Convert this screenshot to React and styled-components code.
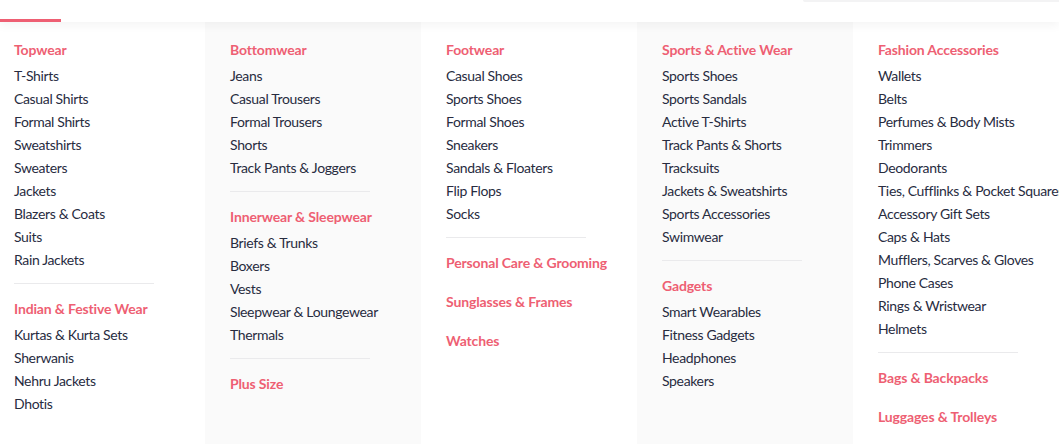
import React from "react";
import styled, { createGlobalStyle } from "styled-components";

const Global = createGlobalStyle`
  html, body { margin: 0; padding: 0; background: #fff; overflow: hidden; }
  body { font-family: Lato, "Noto Sans", sans-serif; -webkit-font-smoothing: antialiased; }
`;

const Page = styled.div`
  width: 1059px;
  height: 444px;
  overflow: hidden;
  display: flex;
  flex-direction: column;
`;

const Header = styled.div`
  position: relative;
  z-index: 2;
  height: 22px;
  flex: none;
  display: flex;
  align-items: flex-start;
  background: #fff;
  box-shadow: 0 4px 10px rgba(0, 0, 0, 0.045);
`;

const ActiveTab = styled.div`
  align-self: flex-end;
  width: 61px;
  height: 3px;
  background: #ee5f73;
`;

const SearchEdge = styled.div`
  margin-left: auto;
  width: 256px;
  height: 2px;
  background: #f3f3f4;
  border-bottom-left-radius: 4px;
`;

const Panel = styled.div`
  flex: 1;
  display: flex;
  align-items: stretch;
`;

const Column = styled.div`
  flex: none;
  box-sizing: border-box;
  width: ${(p) => (p.$first ? "205px" : "216px")};
  padding: 15.5px 0 0 ${(p) => (p.$first ? "14px" : "25px")};
  background: ${(p) => (p.$shade ? "#fafafa" : "#fff")};
  display: flex;
  flex-direction: column;
`;

const Heading = styled.div`
  font-size: 14px;
  line-height: 23px;
  font-weight: 700;
  letter-spacing: -0.15px;
  color: #ee5f73;
  white-space: nowrap;
  margin-bottom: ${(p) => (p.$solo ? "16px" : "3px")};
`;

const Item = styled.div`
  font-size: 14px;
  line-height: 23px;
  letter-spacing: -0.35px;
  color: #282c3f;
  white-space: nowrap;
`;

const Divider = styled.div`
  width: 140px;
  height: 1px;
  background: #eaeaec;
  margin: 12.5px 0 12.5px;
`;

const columns = [
  [
    { title: "Topwear", items: ["T-Shirts", "Casual Shirts", "Formal Shirts", "Sweatshirts", "Sweaters", "Jackets", "Blazers & Coats", "Suits", "Rain Jackets"] },
    "div",
    { title: "Indian & Festive Wear", items: ["Kurtas & Kurta Sets", "Sherwanis", "Nehru Jackets", "Dhotis"] },
  ],
  [
    { title: "Bottomwear", items: ["Jeans", "Casual Trousers", "Formal Trousers", "Shorts", "Track Pants & Joggers"] },
    "div",
    { title: "Innerwear & Sleepwear", items: ["Briefs & Trunks", "Boxers", "Vests", "Sleepwear & Loungewear", "Thermals"] },
    "div",
    { title: "Plus Size" },
  ],
  [
    { title: "Footwear", items: ["Casual Shoes", "Sports Shoes", "Formal Shoes", "Sneakers", "Sandals & Floaters", "Flip Flops", "Socks"] },
    "div",
    { title: "Personal Care & Grooming" },
    { title: "Sunglasses & Frames" },
    { title: "Watches" },
  ],
  [
    { title: "Sports & Active Wear", items: ["Sports Shoes", "Sports Sandals", "Active T-Shirts", "Track Pants & Shorts", "Tracksuits", "Jackets & Sweatshirts", "Sports Accessories", "Swimwear"] },
    "div",
    { title: "Gadgets", items: ["Smart Wearables", "Fitness Gadgets", "Headphones", "Speakers"] },
  ],
  [
    { title: "Fashion Accessories", items: ["Wallets", "Belts", "Perfumes & Body Mists", "Trimmers", "Deodorants", "Ties, Cufflinks & Pocket Squares", "Accessory Gift Sets", "Caps & Hats", "Mufflers, Scarves & Gloves", "Phone Cases", "Rings & Wristwear", "Helmets"] },
    "div",
    { title: "Bags & Backpacks" },
    { title: "Luggages & Trolleys" },
  ],
];

export default function App() {
  return (
    <Page>
      <Global />
      <Header>
        <ActiveTab />
        <SearchEdge />
      </Header>
      <Panel>
        {columns.map((col, ci) => (
          <Column key={ci} $first={ci === 0} $shade={ci % 2 === 1}>
            {col.map((g, gi) =>
              g === "div" ? (
                <Divider key={gi} />
              ) : (
                <React.Fragment key={gi}>
                  <Heading $solo={!g.items}>{g.title}</Heading>
                  {(g.items || []).map((it) => (
                    <Item key={it}>{it}</Item>
                  ))}
                </React.Fragment>
              )
            )}
          </Column>
        ))}
      </Panel>
    </Page>
  );
}
